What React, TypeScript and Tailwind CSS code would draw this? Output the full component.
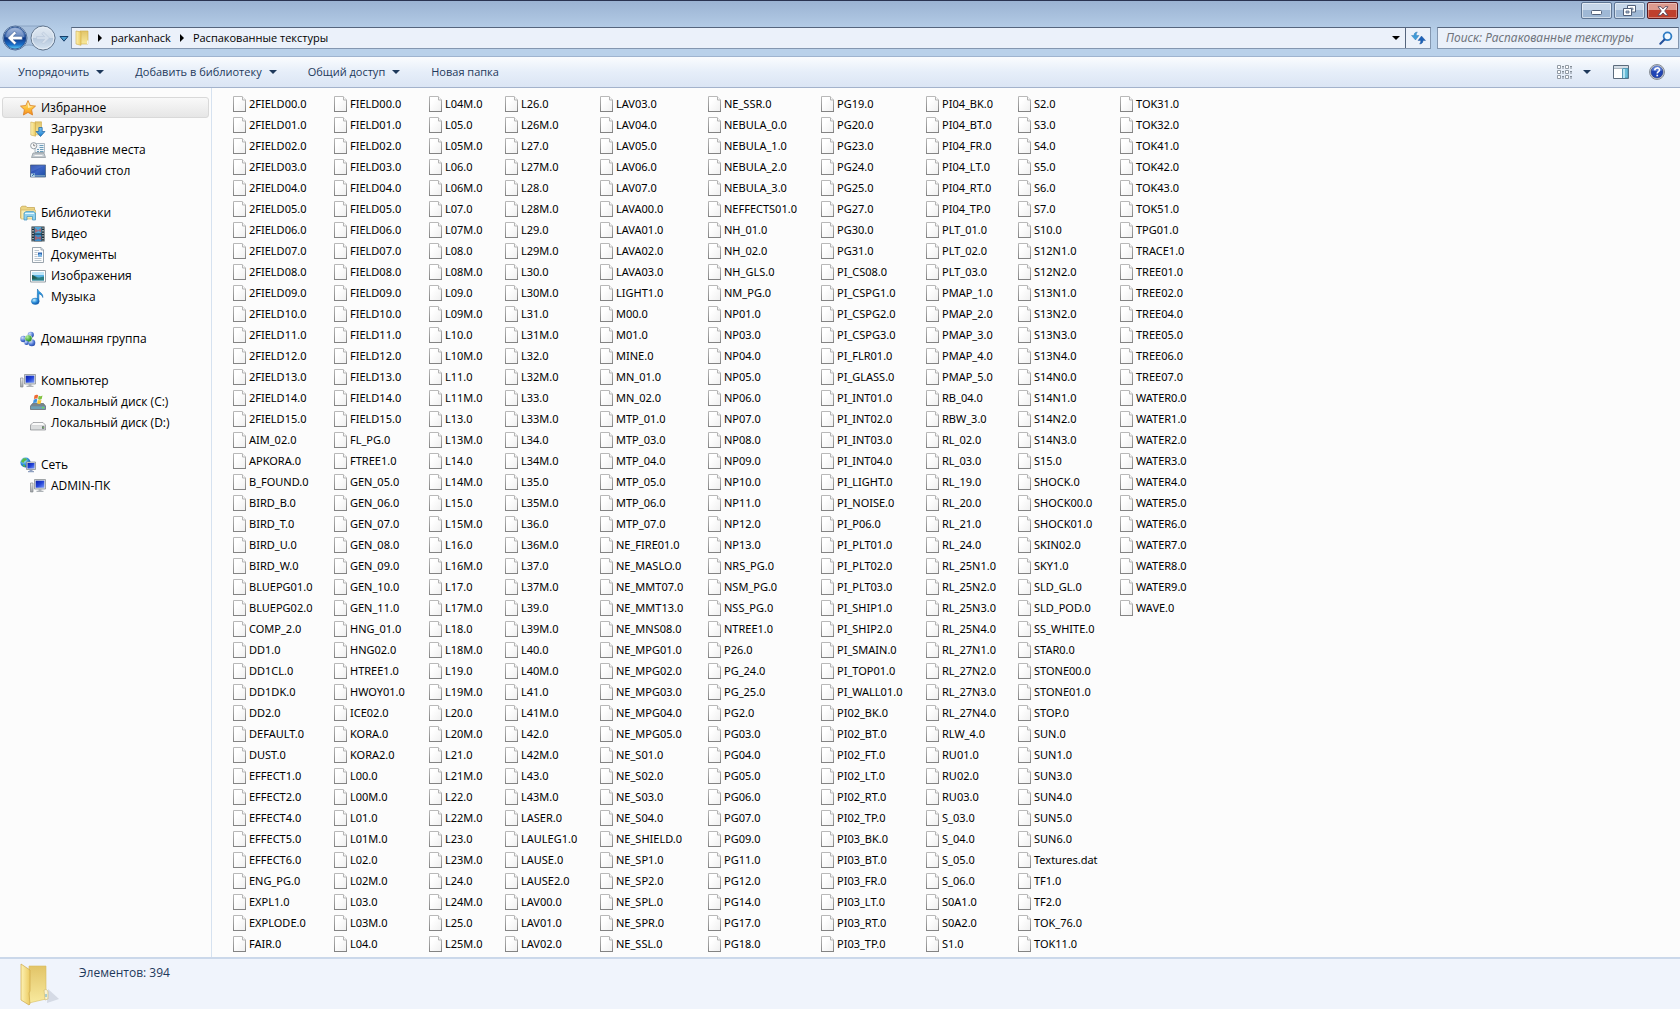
import React from "react";

const seq = (prefix: string, nums: string, suffix = ".0") =>
  nums.split(" ").map((n) => prefix + n + suffix);

const twoDigits = "00 01 02 03 04 05 06 07 08 09 10 11 12 13 14 15";

const words = (s: string) => s.split(" ");

const files: string[] = [
  ...seq("2FIELD", twoDigits),
  ...words(
    "AIM_02.0 APKORA.0 B_FOUND.0 BIRD_B.0 BIRD_T.0 BIRD_U.0 BIRD_W.0 BLUEPG01.0 BLUEPG02.0 COMP_2.0 DD1.0 DD1CL.0 DD1DK.0 DD2.0 DEFAULT.0 DUST.0 EFFECT1.0 EFFECT2.0 EFFECT4.0 EFFECT5.0 EFFECT6.0 ENG_PG.0 EXPL1.0 EXPLODE.0 FAIR.0"
  ),
  ...seq("FIELD", twoDigits),
  ...words(
    "FL_PG.0 FTREE1.0 GEN_05.0 GEN_06.0 GEN_07.0 GEN_08.0 GEN_09.0 GEN_10.0 GEN_11.0 HNG_01.0 HNG02.0 HTREE1.0 HWOY01.0 ICE02.0 KORA.0 KORA2.0 L00.0 L00M.0 L01.0 L01M.0 L02.0 L02M.0 L03.0 L03M.0 L04.0"
  ),
  ...words(
    "L04M.0 L05.0 L05M.0 L06.0 L06M.0 L07.0 L07M.0 L08.0 L08M.0 L09.0 L09M.0 L10.0 L10M.0 L11.0 L11M.0 L13.0 L13M.0 L14.0 L14M.0 L15.0 L15M.0 L16.0 L16M.0 L17.0 L17M.0 L18.0 L18M.0 L19.0 L19M.0 L20.0 L20M.0 L21.0 L21M.0 L22.0 L22M.0 L23.0 L23M.0 L24.0 L24M.0 L25.0 L25M.0"
  ),
  ...words(
    "L26.0 L26M.0 L27.0 L27M.0 L28.0 L28M.0 L29.0 L29M.0 L30.0 L30M.0 L31.0 L31M.0 L32.0 L32M.0 L33.0 L33M.0 L34.0 L34M.0 L35.0 L35M.0 L36.0 L36M.0 L37.0 L37M.0 L39.0 L39M.0 L40.0 L40M.0 L41.0 L41M.0 L42.0 L42M.0 L43.0 L43M.0 LASER.0 LAULEG1.0 LAUSE.0 LAUSE2.0 LAV00.0 LAV01.0 LAV02.0"
  ),
  ...words(
    "LAV03.0 LAV04.0 LAV05.0 LAV06.0 LAV07.0 LAVA00.0 LAVA01.0 LAVA02.0 LAVA03.0 LIGHT1.0 M00.0 M01.0 MINE.0 MN_01.0 MN_02.0 MTP_01.0 MTP_03.0 MTP_04.0 MTP_05.0 MTP_06.0 MTP_07.0 NE_FIRE01.0 NE_MASLO.0 NE_MMT07.0 NE_MMT13.0 NE_MNS08.0 NE_MPG01.0 NE_MPG02.0 NE_MPG03.0 NE_MPG04.0 NE_MPG05.0 NE_S01.0 NE_S02.0 NE_S03.0 NE_S04.0 NE_SHIELD.0 NE_SP1.0 NE_SP2.0 NE_SPL.0 NE_SPR.0 NE_SSL.0"
  ),
  ...words(
    "NE_SSR.0 NEBULA_0.0 NEBULA_1.0 NEBULA_2.0 NEBULA_3.0 NEFFECTS01.0 NH_01.0 NH_02.0 NH_GLS.0 NM_PG.0 NP01.0 NP03.0 NP04.0 NP05.0 NP06.0 NP07.0 NP08.0 NP09.0 NP10.0 NP11.0 NP12.0 NP13.0 NRS_PG.0 NSM_PG.0 NSS_PG.0 NTREE1.0 P26.0 PG_24.0 PG_25.0 PG2.0 PG03.0 PG04.0 PG05.0 PG06.0 PG07.0 PG09.0 PG11.0 PG12.0 PG14.0 PG17.0 PG18.0"
  ),
  ...words(
    "PG19.0 PG20.0 PG23.0 PG24.0 PG25.0 PG27.0 PG30.0 PG31.0 PI_CS08.0 PI_CSPG1.0 PI_CSPG2.0 PI_CSPG3.0 PI_FLR01.0 PI_GLASS.0 PI_INT01.0 PI_INT02.0 PI_INT03.0 PI_INT04.0 PI_LIGHT.0 PI_NOISE.0 PI_P06.0 PI_PLT01.0 PI_PLT02.0 PI_PLT03.0 PI_SHIP1.0 PI_SHIP2.0 PI_SMAIN.0 PI_TOP01.0 PI_WALL01.0 PI02_BK.0 PI02_BT.0 PI02_FT.0 PI02_LT.0 PI02_RT.0 PI02_TP.0 PI03_BK.0 PI03_BT.0 PI03_FR.0 PI03_LT.0 PI03_RT.0 PI03_TP.0"
  ),
  ...words(
    "PI04_BK.0 PI04_BT.0 PI04_FR.0 PI04_LT.0 PI04_RT.0 PI04_TP.0 PLT_01.0 PLT_02.0 PLT_03.0 PMAP_1.0 PMAP_2.0 PMAP_3.0 PMAP_4.0 PMAP_5.0 RB_04.0 RBW_3.0 RL_02.0 RL_03.0 RL_19.0 RL_20.0 RL_21.0 RL_24.0 RL_25N1.0 RL_25N2.0 RL_25N3.0 RL_25N4.0 RL_27N1.0 RL_27N2.0 RL_27N3.0 RL_27N4.0 RLW_4.0 RU01.0 RU02.0 RU03.0 S_03.0 S_04.0 S_05.0 S_06.0 S0A1.0 S0A2.0 S1.0"
  ),
  ...words(
    "S2.0 S3.0 S4.0 S5.0 S6.0 S7.0 S10.0 S12N1.0 S12N2.0 S13N1.0 S13N2.0 S13N3.0 S13N4.0 S14N0.0 S14N1.0 S14N2.0 S14N3.0 S15.0 SHOCK.0 SHOCK00.0 SHOCK01.0 SKIN02.0 SKY1.0 SLD_GL.0 SLD_POD.0 SS_WHITE.0 STAR0.0 STONE00.0 STONE01.0 STOP.0 SUN.0 SUN1.0 SUN3.0 SUN4.0 SUN5.0 SUN6.0 Textures.dat TF1.0 TF2.0 TOK_76.0 TOK11.0"
  ),
  ...words(
    "TOK31.0 TOK32.0 TOK41.0 TOK42.0 TOK43.0 TOK51.0 TPG01.0 TRACE1.0 TREE01.0 TREE02.0 TREE04.0 TREE05.0 TREE06.0 TREE07.0 WATER0.0 WATER1.0 WATER2.0 WATER3.0 WATER4.0 WATER5.0 WATER6.0 WATER7.0 WATER8.0 WATER9.0 WAVE.0"
  ),
];

function Gradients() {
  const v = { x1: "0", y1: "0", x2: "0", y2: "1" };
  return (
    <svg width="0" height="0" className="absolute" aria-hidden="true">
      <defs>
        <linearGradient id="page" x1="0" y1="0" x2="1" y2="1">
          <stop offset="0.3" stopColor="#ffffff" />
          <stop offset="1" stopColor="#efefef" />
        </linearGradient>
        <linearGradient id="pageEdge" {...v}>
          <stop offset="0" stopColor="#b9b9b9" />
          <stop offset="1" stopColor="#858585" />
        </linearGradient>
        <linearGradient id="back" {...v}>
          <stop offset="0" stopColor="#8fa9d3" />
          <stop offset="0.45" stopColor="#2f5ca8" />
          <stop offset="0.5" stopColor="#0d3585" />
          <stop offset="0.8" stopColor="#1a6fca" />
          <stop offset="1" stopColor="#5fd0f5" />
        </linearGradient>
        <linearGradient id="forward" {...v}>
          <stop offset="0" stopColor="#dfe8f2" />
          <stop offset="0.48" stopColor="#d0dce9" />
          <stop offset="0.52" stopColor="#b5c7dc" />
          <stop offset="1" stopColor="#d3e1ef" />
        </linearGradient>
        <linearGradient id="star" {...v}>
          <stop offset="0" stopColor="#fff3b0" />
          <stop offset="0.5" stopColor="#fdc33c" />
          <stop offset="1" stopColor="#f58a1f" />
        </linearGradient>
        <linearGradient id="folderFront" x1="0" y1="0" x2="1" y2="0">
          <stop offset="0" stopColor="#fdf2b4" />
          <stop offset="1" stopColor="#eccb62" />
        </linearGradient>
        <linearGradient id="folderBack" {...v}>
          <stop offset="0" stopColor="#e2c468" />
          <stop offset="1" stopColor="#f8ea9e" />
        </linearGradient>
        <linearGradient id="screen" x1="0" y1="0" x2="1" y2="1">
          <stop offset="0" stopColor="#0a1fa8" />
          <stop offset="0.5" stopColor="#2344d8" />
          <stop offset="1" stopColor="#7d9cf5" />
        </linearGradient>
        <linearGradient id="desk" x1="0" y1="0" x2="1" y2="1">
          <stop offset="0" stopColor="#16318f" />
          <stop offset="0.5" stopColor="#3a63c4" />
          <stop offset="1" stopColor="#1c4fa0" />
        </linearGradient>
        <linearGradient id="blueArrow" {...v}>
          <stop offset="0" stopColor="#7cc4f4" />
          <stop offset="1" stopColor="#1b7fd0" />
        </linearGradient>
        <linearGradient id="metal" {...v}>
          <stop offset="0" stopColor="#f4f4f4" />
          <stop offset="1" stopColor="#9a9fa3" />
        </linearGradient>
        <radialGradient id="globe" cx="0.35" cy="0.3" r="0.8">
          <stop offset="0" stopColor="#c9f0ff" />
          <stop offset="0.5" stopColor="#2f92dc" />
          <stop offset="1" stopColor="#0b3f94" />
        </radialGradient>
        <radialGradient id="ballGreen" cx="0.35" cy="0.3" r="0.8">
          <stop offset="0" stopColor="#b8efa0" />
          <stop offset="0.6" stopColor="#3fa838" />
          <stop offset="1" stopColor="#1f6f25" />
        </radialGradient>
        <radialGradient id="ballBlue" cx="0.35" cy="0.3" r="0.8">
          <stop offset="0" stopColor="#d4e2ff" />
          <stop offset="0.6" stopColor="#4a74d2" />
          <stop offset="1" stopColor="#1e3f9c" />
        </radialGradient>
      </defs>
    </svg>
  );
}

function Icon({ children }: { children: React.ReactNode }) {
  return (
    <svg width="16" height="16" viewBox="0 0 16 16" className="shrink-0" aria-hidden="true">
      {children}
    </svg>
  );
}

function FileIcon() {
  return (
    <svg width="13" height="16" viewBox="0 0 13 16" className="shrink-0" aria-hidden="true">
      <path d="M.5.5h8.500L12.500 4v11.500H.5z" fill="url(#page)" stroke="url(#pageEdge)" />
      <path d="M9.500.5v3.500h3" fill="#f4f4f4" stroke="#b4b4b4" />
      <path d="M0 15.500h13" stroke="#838383" />
    </svg>
  );
}

const StarIcon = (
  <Icon>
    <path d="M8 .6l2.200 4.900 5.300.6-3.900 3.600 1 5.300L8 12.400 3.400 15l1-5.300L.5 6.100l5.300-.6z" fill="url(#star)" stroke="#d97f22" strokeWidth=".8" strokeLinejoin="round" />
    <path d="M8 2.400l1.500 3.800 3.500.5-5 1.300z" fill="#fffbe0" opacity=".7" />
  </Icon>
);
const DownloadsIcon = (
  <Icon>
    <path d="M5 .8h6.500v13H5z" fill="url(#folderBack)" stroke="#cfa94a" strokeWidth=".6" />
    <path d="M.8 1l4.700 1v13.200L.8 14z" fill="url(#folderFront)" stroke="#cfa94a" strokeWidth=".6" />
    <path d="M8.800 6.500h3.400v4H15l-4.500 5-4.500-5h2.800z" fill="url(#blueArrow)" stroke="#1a5f9e" strokeWidth=".7" />
  </Icon>
);
const RecentIcon = (
  <Icon>
    <path d="M5 1.500h9.500v9H5z" fill="#eef3f8" stroke="#9aa7b2" strokeWidth=".8" />
    <path d="M9.500 3.500h4M9.500 5.500h4M7 7.500h2M10 7.500h3.500M7 9.500h2M10 9.500h3.500" stroke="#6a9cba" strokeWidth="1" />
    <path d="M3 11l-1.500 4.500h14L14 11z" fill="#c3cad0" stroke="#89929a" strokeWidth=".7" />
    <path d="M4.500 13.500h8" stroke="#f5f5f5" />
    <circle cx="3.700" cy="3.700" r="3.100" fill="#fbfbfb" stroke="#8b959e" strokeWidth=".9" />
    <path d="M3.700 1.800v2h1.600" fill="none" stroke="#555" strokeWidth=".7" />
  </Icon>
);
const DesktopIcon = (
  <Icon>
    <path d="M.4 2h15.200v12H.4z" fill="url(#desk)" stroke="#51667f" strokeWidth=".8" />
    <path d="M1 2.500h14L1 9z" fill="#5d82d8" opacity=".5" />
    <path d="M1 12h14v1.600H1z" fill="#6e97bd" />
    <path d="M1.200 10.500h3.600v3.200H1.200z" fill="#d5ecf5" />
    <path d="M2 13l2-2M2.500 11H4v1.500" stroke="#1d5fa0" strokeWidth=".8" fill="none" />
  </Icon>
);
const LibrariesIcon = (
  <Icon>
    <path d="M.6 2.500L2 1.200h4l1 1.300h7.500V13H.6z" fill="#ecd583" stroke="#c2a14a" strokeWidth=".7" />
    <path d="M1 5h14.400v9H1z" fill="#f8ecb2" stroke="#d2b562" strokeWidth=".7" />
    <path d="M4 8l2-1.500h7.500L15.500 8v7h-3v-3.500H7V15H4z" fill="#8fd0ee" stroke="#3d91bd" strokeWidth=".7" />
    <path d="M5 8.500h9" stroke="#e4f7ff" />
  </Icon>
);
const VideoIcon = (
  <Icon>
    <path d="M1.500.5h13v15h-13z" fill="#1d2c36" />
    <path d="M4.500 1h7v6.500h-7z" fill="#4fa6d8" />
    <path d="M4.500 8.500h7V15h-7z" fill="#3a8ac6" />
    <path d="M5 2l3 2.500L11 2v4.500L8.500 5 5 7zM5 9.500l3 2 3-1.500v4l-3-1.500-3 2z" fill="#cf4f49" opacity=".65" />
    <path d="M3 1.500v14M13 1.500v14" stroke="#e9eef1" strokeWidth="1.200" strokeDasharray="1.300 1.300" />
  </Icon>
);
const DocumentsIcon = (
  <Icon>
    <path d="M2.500.5h8.500l2.500 2.500v12.500h-11z" fill="#fdfdfd" stroke="#8e9aa4" strokeWidth=".9" />
    <path d="M11 .5V3h2.500" fill="#dfe5ea" stroke="#8e9aa4" strokeWidth=".7" />
    <path d="M4.500 3.500H9M4.500 5.500h3M4.500 7.500h3M4.500 9.500h3M4.500 11.500h7M4.500 13.500h7" stroke="#a9b6c0" strokeWidth=".8" />
    <path d="M8 5.500h4v4H8z" fill="#2b62b0" />
    <path d="M8 8l2-1.500 2 1.500v1.500H8z" fill="#7cb8e6" />
  </Icon>
);
const PicturesIcon = (
  <Icon>
    <path d="M.5 2.500h15v11.500H.5z" fill="#fff" stroke="#8b959d" strokeWidth=".9" />
    <path d="M2 4h12v8.500H2z" fill="#5bb5e6" />
    <path d="M2 4h12v3L2 7z" fill="#bfe6f8" />
    <path d="M2 7.500c3 0 5 2 7 2s3-1 5-1v4H2z" fill="#2c7f83" />
    <path d="M2 7c2 .5 3.500 2 5.500 3.500L2 11z" fill="#215d52" />
  </Icon>
);
const MusicIcon = (
  <Icon>
    <path d="M7.500 0c.3 3 5.800 3.500 5.300 8.500-.5-2.300-2.500-3.500-4-3.800V12h-1.600z" fill="#2a9be6" stroke="#1266ac" strokeWidth=".6" />
    <ellipse cx="5.300" cy="12.300" rx="3.900" ry="3.200" fill="url(#globe)" stroke="#1a76bd" strokeWidth=".5" />
  </Icon>
);
const HomegroupIcon = (
  <Icon>
    <circle cx="10.800" cy="3.800" r="3.100" fill="url(#ballBlue)" />
    <circle cx="3.500" cy="8" r="3.200" fill="url(#ballBlue)" />
    <circle cx="11.800" cy="11.800" r="3.500" fill="url(#ballBlue)" />
    <circle cx="8.500" cy="7.500" r="3.600" fill="url(#ballGreen)" stroke="#e3f3dd" strokeWidth=".6" />
    <circle cx="6.500" cy="11.700" r="2.200" fill="url(#ballBlue)" />
  </Icon>
);
const ComputerIcon = (
  <Icon>
    <path d="M.5 5h2.500v9H.5z" fill="url(#metal)" stroke="#85898c" strokeWidth=".7" />
    <path d="M4.500 1.500h11v9.500h-11z" fill="#dadfe3" stroke="#8b9094" strokeWidth=".8" />
    <path d="M5.700 2.700h8.600v7H5.700z" fill="url(#screen)" />
    <path d="M8.500 11h3v1.800h2V14h-7v-1.200h2z" fill="#aeb3b7" />
  </Icon>
);
const SystemDriveIcon = (
  <Icon>
    <path d="M2.500 9.500h11l2 2.500v3.500H.5V12z" fill="#78858c" stroke="#5a666d" strokeWidth=".7" />
    <path d="M1 12.300h14v2.700H1z" fill="#6fa0b5" />
    <path d="M12 13h2v1.200h-2z" fill="#69e04e" />
    <path d="M4.500 1.500c1.500-.9 2.500-.8 3.600-.2L7.400 4.800c-1.200-.6-2.200-.5-3.500.2z" fill="#ee6a34" />
    <path d="M8.700 1.700c1.300.6 2.400.6 3.800-.2l-.8 3.600c-1.300.7-2.400.7-3.700.1z" fill="#83c341" />
    <path d="M3.700 5.700c1.400-.8 2.400-.7 3.500-.2l-.7 3.600C5.300 8.500 4.300 8.600 3 9.300z" fill="#3d92dd" />
    <path d="M7.800 5.900c1.300.6 2.400.6 3.700-.1l-.8 3.600c-1.300.7-2.300.6-3.600.1z" fill="#fbc531" />
  </Icon>
);
const DriveIcon = (
  <Icon>
    <path d="M3 7.500h10l2.500 2.500v5H.5v-5z" fill="url(#metal)" stroke="#8a8d90" strokeWidth=".7" />
    <path d="M1.500 10l2-2h9l2 2z" fill="#fafafa" />
    <path d="M1 10.500h14v4H1z" fill="#dcdedf" />
    <path d="M12 11.300h2.300v2.400H12z" fill="#5b6165" />
    <path d="M12.700 12h1v1h-1z" fill="#7be35c" />
  </Icon>
);
const NetworkIcon = (
  <Icon>
    <circle cx="5.500" cy="5.500" r="5.100" fill="url(#globe)" />
    <path d="M3 1.500c2-.8 3.500-.2 4 .8C6 4 4.500 3.500 4 5.500 3 6 1.500 5 1 4.500z" fill="#58b94a" />
    <path d="M3 7.500c1.500-.3 2.500.7 2 2.500-1.200.2-2.400-1-2-2.500z" fill="#58b94a" />
    <path d="M6.500 5h9v7.500h-9z" fill="#dadfe3" stroke="#7f8589" strokeWidth=".7" />
    <path d="M7.500 6h7v5.500h-7z" fill="url(#screen)" />
    <path d="M9.500 12.500h3v1.500h1.500v1.300H8V14h1.500z" fill="#8fa0c0" />
  </Icon>
);

type NavItem = { label: string; icon: React.ReactNode };
type NavGroup = { head: NavItem; items: NavItem[]; selected?: boolean };

const groups: NavGroup[] = [
  {
    head: { label: "Избранное", icon: StarIcon },
    selected: true,
    items: [
      { label: "Загрузки", icon: DownloadsIcon },
      { label: "Недавние места", icon: RecentIcon },
      { label: "Рабочий стол", icon: DesktopIcon },
    ],
  },
  {
    head: { label: "Библиотеки", icon: LibrariesIcon },
    items: [
      { label: "Видео", icon: VideoIcon },
      { label: "Документы", icon: DocumentsIcon },
      { label: "Изображения", icon: PicturesIcon },
      { label: "Музыка", icon: MusicIcon },
    ],
  },
  { head: { label: "Домашняя группа", icon: HomegroupIcon }, items: [] },
  {
    head: { label: "Компьютер", icon: ComputerIcon },
    items: [
      { label: "Локальный диск (C:)", icon: SystemDriveIcon },
      { label: "Локальный диск (D:)", icon: DriveIcon },
    ],
  },
  {
    head: { label: "Сеть", icon: NetworkIcon },
    items: [{ label: "ADMIN-ПК", icon: ComputerIcon }],
  },
];

function Down({ className = "" }: { className?: string }) {
  return (
    <svg width="8" height="4" viewBox="0 0 8 4" className={className} fill="currentColor" aria-hidden="true">
      <path d="M0 0h8L4 4z" />
    </svg>
  );
}

function Right() {
  return (
    <svg width="4" height="8" viewBox="0 0 4 8" fill="#000" aria-hidden="true">
      <path d="M0 0l4 4-4 4z" />
    </svg>
  );
}

function TitleBar() {
  const base =
    "flex h-[17px] w-[31px] items-center justify-center rounded-[2px] border border-[#5f7593] bg-linear-to-b from-[#c6d6e9] from-50% to-[#9fb8d5] to-50% shadow-[inset_0_0_0_1px_rgba(255,255,255,0.5)]";
  return (
    <div className="flex h-[27px] items-start justify-end gap-0.5 border-t border-[#2a3350] pt-px pr-0.5">
      <button aria-label="Свернуть" className={base}>
        <svg width="11" height="5" viewBox="0 0 11 5" className="mt-1">
          <rect x=".5" y=".5" width="10" height="4" rx="1" fill="#fff" stroke="#53617a" />
        </svg>
      </button>
      <button aria-label="Свернуть в окно" className={base}>
        <svg width="13" height="11" viewBox="0 0 13 11">
          <path d="M4.500.5h8v6.500h-8z" fill="#fff" stroke="#53617a" />
          <path d="M7 3h3v2H7z" fill="#a9bdd6" stroke="#53617a" strokeWidth=".6" />
          <path d="M.5 3.500h8v7h-8z" fill="#fff" stroke="#53617a" />
          <path d="M3 6h3v2H3z" fill="#a9bdd6" stroke="#53617a" strokeWidth=".8" />
        </svg>
      </button>
      <button
        aria-label="Закрыть"
        className="flex h-[17px] w-[31px] items-center justify-center rounded-[2px] border border-[#5a1a20] bg-linear-to-b from-[#dd9a8e] from-50% to-[#bf3f2c] to-50% shadow-[inset_0_0_0_1px_rgba(255,255,255,0.35)]"
      >
        <svg width="12" height="10" viewBox="0 0 12 10">
          <path d="M1 .7h3L6 3 8 .7h3L7.700 5 11 9.300H8L6 7 4 9.300H1L4.300 5z" fill="#fff" stroke="#5a4a5c" strokeWidth=".9" strokeLinejoin="round" />
        </svg>
      </button>
    </div>
  );
}

function NavBar() {
  return (
    <div className="flex h-[29px] items-start pr-px">
      <div className="flex w-[71px] items-center">
        <svg width="56" height="26" viewBox="0 0 56 26" className="-mt-0.5 ml-0.5" role="img" aria-label="Назад и вперёд">
          <path d="M13 1h28a12 12 0 0 1 0 24c-5 0-7-5-14-5S18 25 13 25z" fill="#a9c1dd" stroke="#8aa4c4" />
          <circle cx="13" cy="13" r="12" fill="#e2ecf7" stroke="#52709c" />
          <circle cx="13" cy="13" r="11" fill="url(#back)" stroke="#1d4687" strokeWidth=".8" />
          <path d="M4 12a9 9 0 0 1 18 0c-5 1.500-13 1.500-18 0z" fill="#fff" opacity=".25" />
          <path d="M12.500 6.200L5.600 13l6.900 6.800 2-2L11.300 14.700h9V11.300h-9l3.200-3.100z" fill="#fff" stroke="#234a86" strokeWidth=".5" />
          <circle cx="41" cy="13" r="12" fill="#d5e1ef" stroke="#66798f" />
          <circle cx="41" cy="13" r="10.800" fill="url(#forward)" stroke="#e8f0f8" strokeWidth=".8" />
          <path d="M41.500 7l6 6-6 6-1.800-1.800 2.900-2.800h-8v-2.800h8l-2.900-2.800z" fill="#d3deeb" stroke="#b3c3d6" strokeWidth=".6" />
        </svg>
        <button aria-label="Последние страницы" className="flex w-[11px] items-center justify-center">
          <svg width="10" height="6" viewBox="0 0 10 6">
            <path d="M1 .5h8L5 5.200z" fill="#4b9fd0" stroke="#173f6b" strokeLinejoin="round" />
          </svg>
        </button>
      </div>
      <div className="flex h-[22px] min-w-0 flex-1 border border-[#8497b0] border-t-[#55657d] bg-[#ebf1fa]">
        <nav aria-label="Адрес" className="flex min-w-0 flex-1 items-center pl-0.5 text-[11px] leading-4">
          <Icon>
            <path d="M6 1h8v13H6z" fill="url(#folderBack)" stroke="#cfac4c" strokeWidth=".6" />
            <path d="M2 1l5 1v13.300L2 14z" fill="url(#folderFront)" stroke="#cfac4c" strokeWidth=".6" />
            <path d="M13 10.500h1.500v3.500H13z" fill="#f6f4ea" />
          </Icon>
          <span className="ml-2 flex items-center">
            <Right />
            <a href="#parkanhack" className="ml-[9px] text-black">parkanhack</a>
          </span>
          <span className="ml-[9px] flex items-center">
            <Right />
            <a href="#textures" className="ml-[9px] text-black">Распакованные текстуры</a>
          </span>
        </nav>
        <button aria-label="Предыдущие расположения" className="flex w-[18px] items-center justify-center text-black">
          <Down />
        </button>
        <button aria-label="Обновить" className="flex w-[25px] items-center justify-center border-l border-[#55657d]">
          <svg width="15" height="14" viewBox="0 0 15 14">
            <path d="M6.500 1C4 1 3 2.500 3 4.500H.5L4.500 9 8 4.500H5.300c0-1.700.3-2.800 1.200-3.500z" fill="#3f9bd8" stroke="#2a72ae" strokeWidth=".4" />
            <path d="M8.500 13c2.500 0 3.500-1.500 3.500-3.500h2.500L10.500 5 7 9.500h2.700c0 1.700-.3 2.800-1.200 3.500z" fill="#1d62b8" stroke="#174f97" strokeWidth=".4" />
          </svg>
        </button>
      </div>
      <form role="search" className="ml-1.5 flex h-[22px] w-[242px] items-center border border-[#8497b0] border-t-[#55657d] bg-[#ebf1fa] pr-[5px]">
        <input
          type="text"
          aria-label="Поиск"
          placeholder="Поиск: Распакованные текстуры"
          className="min-w-0 flex-1 bg-transparent pl-2 font-['Noto_Sans',sans-serif] text-[12px] leading-4 italic outline-none placeholder:text-[#70757d]"
        />
        <svg width="14" height="14" viewBox="0 0 14 14" aria-hidden="true">
          <circle cx="8.500" cy="5.300" r="3.900" fill="#f2f9ff" stroke="#2f7cc4" strokeWidth="1.800" />
          <path d="M5.500 8.500L1.300 12.700" stroke="#24509a" strokeWidth="2" strokeLinecap="round" />
        </svg>
      </form>
    </div>
  );
}

function ToolBar() {
  return (
    <div className="flex h-8 items-center border-t border-b border-t-[#9fb4cf] border-b-[#a3b2cb] bg-linear-to-b from-[#fafcfe] via-[#e6eef9] via-50% to-[#dbe5f4] pl-[18px] text-[11px] leading-4 text-[#1e395b]">
      <button className="flex items-center gap-[7px]">Упорядочить <Down /></button>
      <button className="ml-[31px] flex items-center gap-[7px]">Добавить в библиотеку <Down /></button>
      <button className="ml-[31px] flex items-center gap-[7px]">Общий доступ <Down /></button>
      <button className="ml-[31px]">Новая папка</button>
      <div className="ml-auto flex items-center pr-[15px]">
        <button aria-label="Изменить представление">
          <svg width="16" height="14" viewBox="0 0 16 14">
            {[0, 5, 10].map((y) => (
              <g key={y}>
                <path d={`M.5 ${y + 0.5}h3v3h-3zM8.500 ${y + 0.5}h3v3h-3z`} fill="#fff" stroke="#87909b" strokeWidth=".9" />
                <path d={`M5 ${y + 1.5}h2M13 ${y + 1.5}h2M5 ${y + 3}h2M13 ${y + 3}h2`} stroke="#68727e" strokeWidth=".8" />
              </g>
            ))}
          </svg>
        </button>
        <button aria-label="Другие представления" className="ml-2.5"><Down /></button>
        <button aria-label="Область просмотра" className="ml-[22px]">
          <svg width="16" height="14" viewBox="0 0 16 14">
            <path d="M.5.5h15v13H.5z" fill="#fff" stroke="#5b6b7c" />
            <path d="M1 1h14v2H1z" fill="#d4dde6" />
            <path d="M9.500 3.500h5.500v9.500H9.500z" fill="#69bdd8" stroke="#3d88a8" strokeWidth=".8" />
            <path d="M10 4h2v9h-2z" fill="#b6e4f2" />
            <path d="M1 3.500h8" stroke="#8896a4" strokeWidth=".7" />
          </svg>
        </button>
        <button aria-label="Справка" className="ml-5">
          <svg width="16" height="16" viewBox="0 0 16 16">
            <circle cx="8" cy="8" r="7.500" fill="#cfd3d8" stroke="#7c828b" strokeWidth=".9" />
            <circle cx="8" cy="8" r="6" fill="#1f44b5" stroke="#283a78" strokeWidth=".6" />
            <path d="M3 6.500a5 5 0 0 1 10 0c-3 1-7 1-10 0z" fill="#7d9cea" opacity=".6" />
            <path d="M5.800 6.300c0-3.200 4.700-3 4.700-.4 0 1.600-2.300 1.700-2.300 3.500" fill="none" stroke="#fff" strokeWidth="1.600" />
            <path d="M7.400 10.700h1.700v1.600H7.400z" fill="#fff" />
          </svg>
        </button>
      </div>
    </div>
  );
}

function SideBar() {
  return (
    <aside className="w-[212px] shrink-0 border-r border-[#d6e2f0] pt-[9px]">
      {groups.map((g) => (
        <section key={g.head.label} className="mb-[21px] px-0.5">
          <a
            href="#group"
            className={
              g.selected
                ? "flex h-[21px] items-center gap-[5px] rounded-[3px] border border-[#d9d9d9] bg-linear-to-b from-[#f9f9f9] to-[#e6e6e6] pl-[17px]"
                : "flex h-[21px] items-center gap-[5px] pl-[18px]"
            }
          >
            {g.head.icon}
            {g.head.label}
          </a>
          {g.items.map((i) => (
            <a key={i.label} href="#item" className="flex h-[21px] items-center gap-[5px] pl-7">
              {i.icon}
              {i.label}
            </a>
          ))}
        </section>
      ))}
    </aside>
  );
}

function FileList() {
  return (
    <ul className="grid grid-flow-col grid-cols-[101px_95px_76px_95px_108px_113px_105px_92px_102px_95px] grid-rows-[repeat(41,21px)] content-start pt-[5px] pb-0.5 pl-[21px] font-['Noto_Sans',sans-serif] text-[11px]">
      {files.map((name) => (
        <li key={name} className="flex items-center gap-[3px] whitespace-nowrap">
          <FileIcon />
          {name}
        </li>
      ))}
    </ul>
  );
}

function StatusBar() {
  return (
    <footer className="flex h-[52px] items-start border-t-2 border-[#cbd8ea] bg-[#f0f4fc] pl-[18px] text-[#1e395b]">
      <svg width="44" height="46" viewBox="0 0 44 46" className="mt-1" aria-hidden="true">
        <path d="M29 40l12-4-11-10z" fill="#b9c0cd" opacity=".5" />
        <path d="M11 3h17v33l-17 4z" fill="url(#folderBack)" stroke="#d9bd60" strokeWidth=".6" />
        <path d="M3 1l9 6v21l-1 2 1 11-1 1-8-5z" fill="url(#folderFront)" stroke="#cda849" strokeWidth=".7" />
        <path d="M26 27c2-1 4 0 4 2v7l-3 1z" fill="#f8f3d4" stroke="#cdb567" strokeWidth=".6" />
        <path d="M28 31v3" stroke="#5aa7c8" strokeWidth="1" />
      </svg>
      <p className="mt-[5px] ml-[17px]">Элементов: 394</p>
    </footer>
  );
}

export default function App() {
  return (
    <div className="flex min-h-screen flex-col bg-[#fcfcfc] font-['Open_Sans','Noto_Sans',sans-serif] text-[12px] leading-[17px] text-black">
      <Gradients />
      <header>
        <div className="bg-linear-to-b from-[#9ab2d2] to-[#b9d1ea] to-60%">
          <TitleBar />
          <NavBar />
        </div>
        <ToolBar />
      </header>
      <main className="flex flex-1">
        <SideBar />
        <FileList />
      </main>
      <StatusBar />
    </div>
  );
}
